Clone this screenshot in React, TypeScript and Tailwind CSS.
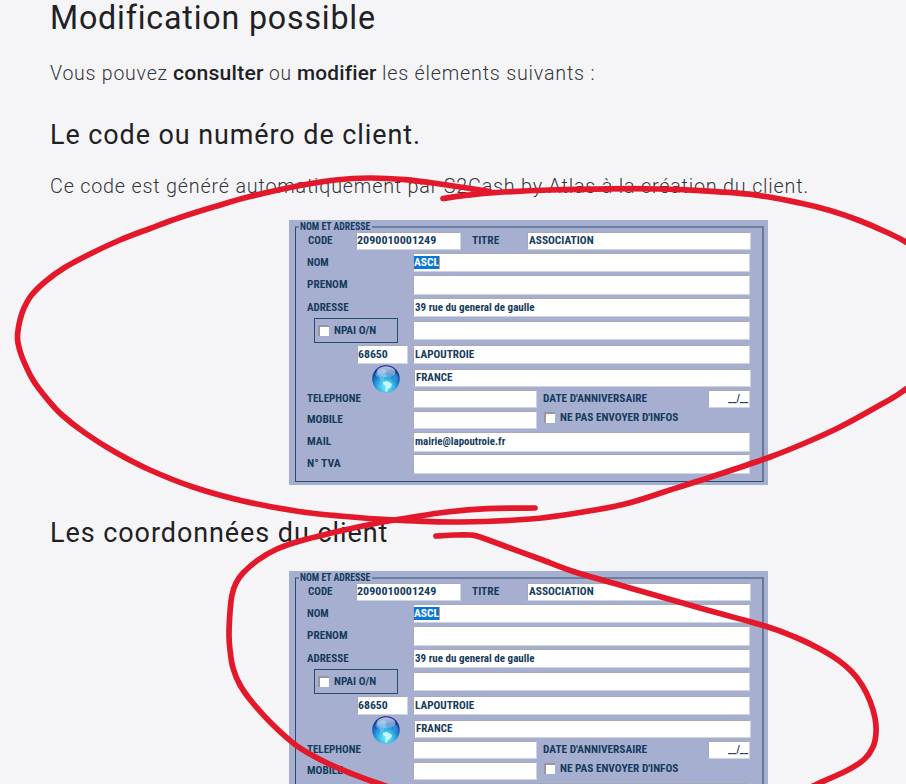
import { useLayoutEffect, useRef, type ReactNode } from "react";

/** Inline text condensed or expanded so that it occupies a given width. */
function Fit({ w, children, className = "" }: { w: number; children: ReactNode; className?: string }) {
  const ref = useRef<HTMLSpanElement>(null);
  useLayoutEffect(() => {
    const el = ref.current;
    if (el) el.style.transform = `scaleX(${w / el.offsetWidth})`;
  }, [w]);
  return (
    <span className="block shrink-0" style={{ width: w }}>
      <span ref={ref} className={`inline-block origin-left whitespace-nowrap ${className}`}>
        {children}
      </span>
    </span>
  );
}

function Label({ w, children }: { w: number; children: ReactNode }) {
  return (
    <div className="w-[106px] shrink-0">
      <Fit w={w}>{children}</Fit>
    </div>
  );
}

function Field({ className = "pl-px", children }: { className?: string; children?: ReactNode }) {
  return (
    <div
      className={`flex h-full shrink-0 items-center border border-t-[#a7a9b4] border-l-[#a7a9b4] border-r-[#d0d4e2] border-b-[#d0d4e2] bg-white ${className}`}
    >
      {children}
    </div>
  );
}

function Check() {
  return (
    <span className="block size-[11px] shrink-0 border-t-2 border-l-2 border-[#98979b] bg-white" />
  );
}

function Globe() {
  return (
    <svg viewBox="0 0 28 28" className="-my-[5px] ml-[65px] size-7 shrink-0 translate-y-px">
      <defs>
        <radialGradient id="sea" cx="50%" cy="78%" r="72%">
          <stop offset="0" stopColor="#7df4ff" />
          <stop offset="0.4" stopColor="#35b3e6" />
          <stop offset="0.75" stopColor="#1763bd" />
          <stop offset="1" stopColor="#101f86" />
        </radialGradient>
        <linearGradient id="shine" x1="0" y1="0" x2="0" y2="1">
          <stop offset="0" stopColor="#fff" stopOpacity="0.75" />
          <stop offset="1" stopColor="#fff" stopOpacity="0.15" />
        </linearGradient>
      </defs>
      <circle cx="14" cy="14" r="13.8" fill="url(#sea)" />
      <path d="M3 9 7 5l5-1 3 2-2 3 2 2-3 2-1 3 3 1-1 1-4-2-3-4-2-1z" fill="#8bd4f0" opacity="0.45" />
      <path d="m11 17 4-1 5 3-1 3-3 2-1 3-2-1 1-5-3-2z" fill="#d3fbff" opacity="0.9" />
      <path d="m21 8 4 1 1 5-3 2-2-3z" fill="#4a9ed9" opacity="0.5" />
      <ellipse cx="14" cy="7" rx="9.5" ry="5.8" fill="url(#shine)" />
    </svg>
  );
}

function ClientForm() {
  return (
    <div className="ml-[239px] h-[265px] w-[479px] bg-[#a6afcf] pt-[6px] pl-[6px] font-['Roboto_Condensed','Roboto',sans-serif] text-[11px] leading-[14px] font-bold text-[#153b5e]">
      <div className="h-[256px] w-[469px] border border-t-2 border-r-2 border-[#284b6d] border-t-[#6b7f9f] border-r-[#647a9b] pl-[11px]">
        <div className="-mt-[8px] -ml-[8px] flex h-3 w-[73px] items-center bg-[#a6afcf] pl-px text-[10px] leading-3">
          <Fit w={70} className="relative top-px">NOM ET ADRESSE</Fit>
        </div>
        <div className="flex h-[18px] items-center">
          <div className="w-[49px] pl-px">
            <Fit w={25}>CODE</Fit>
          </div>
          <Field className="w-[105px]">
            <Fit w={79}>2090010001249</Fit>
          </Field>
          <div className="w-[66px] pl-[11px]">
            <Fit w={27}>TITRE</Fit>
          </div>
          <Field className="w-[224px] pl-px">
            <Fit w={65}>ASSOCIATION</Fit>
          </Field>
        </div>
        <div className="mt-[3px] flex h-[19px] items-center">
          <Label w={22}>NOM</Label>
          <Field className="w-[337px]">
            <span className="h-[13px] border-r border-[#e79a61] bg-[#0877d8] leading-[13px] text-white">
              <Fit w={25}>ASCL</Fit>
            </span>
          </Field>
        </div>
        <div className="mt-[3px] flex h-5 items-center">
          <Label w={40}>PRENOM</Label>
          <Field className="w-[337px]" />
        </div>
        <div className="mt-[3px] flex h-[19px] items-center">
          <Label w={42}>ADRESSE</Label>
          <Field className="w-[337px] pl-px">
            <Fit w={120}>39 rue du general de gaulle</Fit>
          </Field>
        </div>
        <div className="mt-[4px] flex h-[19px] items-center">
          <div className="-my-[3px] mr-[15px] ml-[7px] flex h-[25px] w-[84px] shrink-0 items-center gap-[5px] border border-[#284b6d] pl-[3px]">
            <Check />
            <Fit w={42}>NPAI O/N</Fit>
          </div>
          <Field className="w-[337px]" />
        </div>
        <div className="mt-[5px] flex h-[19px] items-center">
          <Field className="mr-[5px] ml-[50px] w-[51px]">
            <Fit w={30}>68650</Fit>
          </Field>
          <Field className="w-[337px] pl-px">
            <Fit w={59}>LAPOUTROIE</Fit>
          </Field>
        </div>
        <div className="mt-[5px] flex h-[18px] items-center">
          <Globe />
          <Field className="ml-[14px] w-[337px] pl-px">
            <Fit w={36}>FRANCE</Fit>
          </Field>
        </div>
        <div className="mt-[3px] flex h-[18px] items-center">
          <Label w={54}>TELEPHONE</Label>
          <Field className="w-[124px]" />
          <div className="w-[171px] pl-[6px]">
            <Fit w={104}>DATE D'ANNIVERSAIRE</Fit>
          </div>
          <Field className="w-[42px] justify-end pr-px">
            <Fit w={20}>__/__</Fit>
          </Field>
        </div>
        <div className="mt-[3px] flex h-[18px] items-center">
          <Label w={36}>MOBILE</Label>
          <Field className="w-[124px]" />
          <div className="-mt-[5px] flex items-center gap-[5px] pl-[7px]">
            <Check />
            <Fit w={118}>NE PAS ENVOYER D'INFOS</Fit>
          </div>
        </div>
        <div className="mt-[3px] flex h-5 items-center">
          <Label w={24}>MAIL</Label>
          <Field className="w-[337px] pl-px">
            <Fit w={90}>mairie@lapoutroie.fr</Fit>
          </Field>
        </div>
        <div className="mt-[2px] flex h-5 items-center">
          <Label w={34}>N° TVA</Label>
          <Field className="w-[337px]" />
        </div>
      </div>
    </div>
  );
}

type Point = [number, number];

const upperLoop: Point[] = [
  [443, 198.5], [467, 195.2], [497, 192.5], [550, 190], [610, 188.8], [660, 189], [700, 190.7], [753, 194.7],
  [800, 203], [830, 210.5], [858, 220], [886, 232], [908, 243.5], [945, 272], [960, 310], [945, 355], [906, 389],
  [880, 405], [840, 427], [805, 443], [770, 457], [720, 474], [670, 490], [625, 504], [580, 512.5], [530, 519],
  [460, 522], [395, 520], [340, 516], [296, 511], [243, 501], [193, 487], [150, 470], [115, 452], [85, 433],
  [62, 415], [48, 400], [33, 380], [22, 357], [18, 343], [17.7, 333], [20, 320], [24, 308], [32, 294.5], [46, 281],
  [64, 268], [90, 254], [120, 240], [150, 228.5], [180, 217.5], [215, 206.5], [250, 196.5], [300, 185.5],
  [335, 180], [370, 178], [405, 179.7], [440, 184], [490, 191.5],
];

const lowerLoop: Point[] = [
  [535, 508], [487, 508.7], [447, 512], [407, 518], [375, 523.5], [340, 531], [300, 541], [277, 549], [258, 560],
  [243, 573], [236, 583], [232, 595], [230, 612], [229, 635], [230, 650], [233, 668], [240, 685], [252, 702],
  [272, 724], [297, 746], [323, 761], [350, 773], [380, 784], [440, 802], [560, 820], [700, 815], [780, 800],
  [817, 784], [847, 770.5], [864, 759.5], [873, 747], [876, 733], [875, 718], [870, 701], [862, 685], [852, 672],
  [838, 660], [820, 649], [795, 637], [765, 626], [700, 608], [630, 588], [575, 572], [540, 559], [510, 548],
  [480, 537], [470, 535], [455, 535], [436, 536],
];

/** Smooth cubic path running through every point. */
function smooth(p: Point[]) {
  let d = `M${p[0][0]} ${p[0][1]}`;
  for (let i = 0; i < p.length - 1; i++) {
    const a = p[i - 1] ?? p[i];
    const b = p[i];
    const c = p[i + 1];
    const e = p[i + 2] ?? c;
    d += `C${b[0] + (c[0] - a[0]) / 6} ${b[1] + (c[1] - a[1]) / 6} ${c[0] - (e[0] - b[0]) / 6} ${c[1] - (e[1] - b[1]) / 6} ${c[0]} ${c[1]}`;
  }
  return d;
}

export default function App() {
  return (
    <main className="relative h-[784px] w-[906px] overflow-hidden bg-[#f5f5f8] pl-[50px] font-['Roboto',sans-serif] text-[#1f2124]">
      <h1 className="h-[58px] text-[33px] leading-9 tracking-[0.025em]">
        <Fit w={326}>Modification possible</Fit>
      </h1>
      <p className="flex h-[61px] gap-[5px] text-[20px] leading-[30px] font-light tracking-[0.04em] text-[#34363a]">
        <Fit w={118}>Vous pouvez</Fit>
        <Fit w={91} className="font-medium tracking-[0.01em] text-[#1f2124]">consulter</Fit>
        <Fit w={23}>ou</Fit>
        <Fit w={80} className="font-medium tracking-[0.01em] text-[#1f2124]">modifier</Fit>
        <Fit w={213}>les élements suivants :</Fit>
      </p>
      <h2 className="h-[52px] text-[28px] leading-8 tracking-[0.035em]">
        <Fit w={371}>Le code ou numéro de client.</Fit>
      </h2>
      <p className="h-[49px] text-[20px] leading-[30px] font-light tracking-[0.04em] text-[#34363a]">
        <Fit w={759}>Ce code est généré automatiquement par S2Cash by Atlas à la création du client.</Fit>
      </p>
      <ClientForm />
      <h2 className="h-[86px] pt-[32px] text-[28px] leading-8 tracking-[0.035em]">
        <Fit w={338}>Les coordonnées du client</Fit>
      </h2>
      <ClientForm />
      <svg
        viewBox="0 0 906 784"
        className="pointer-events-none absolute inset-0 h-[784px] w-[906px]"
        fill="none"
        stroke="#e4182b"
        strokeWidth="5.7"
        strokeLinecap="round"
        strokeLinejoin="round"
      >
        <path d={smooth(upperLoop)} />
        <path d={smooth(lowerLoop)} />
      </svg>
    </main>
  );
}
